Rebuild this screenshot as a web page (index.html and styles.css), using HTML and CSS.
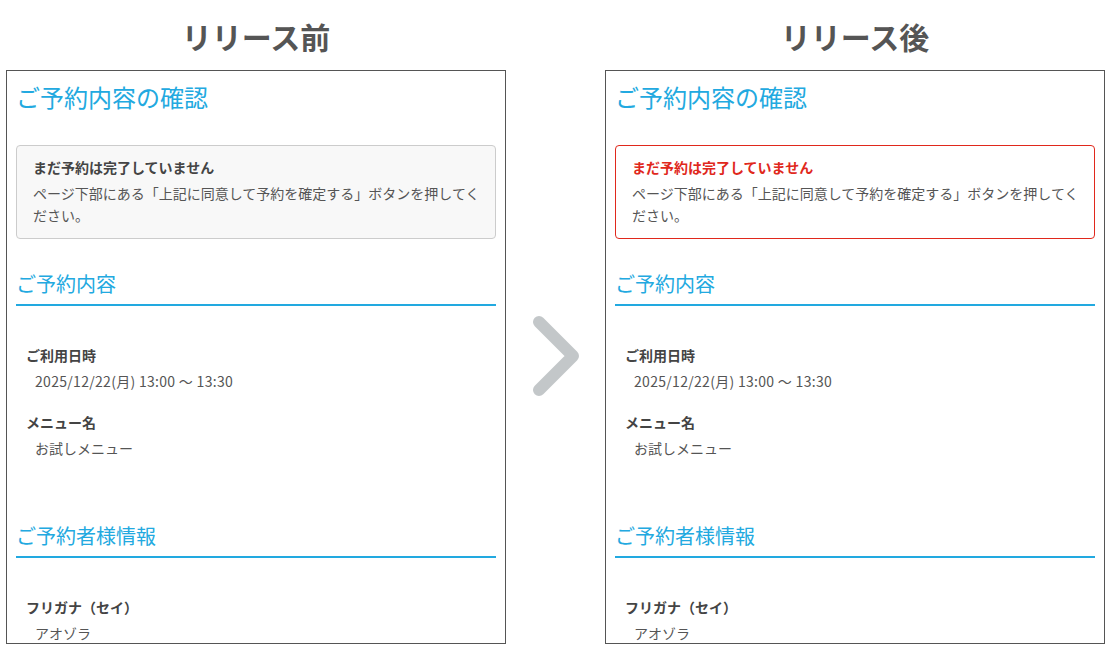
FILE: index.html
```html
<!DOCTYPE html>
<html lang="ja">
<head>
<meta charset="utf-8">
<link rel="stylesheet" href="styles.css">
</head>
<body>
<div class="compare">
  <section class="column">
    <h1 class="col-title">リリース前</h1>
    <div class="panel">
      <h2 class="page-title">ご予約内容の確認</h2>
      <div class="notice">
        <p class="notice-title">まだ予約は完了していません</p>
        <p class="notice-text">ページ下部にある「上記に同意して予約を確定する」ボタンを押してください。</p>
      </div>
      <h3 class="sec-title">ご予約内容</h3>
      <dl class="fields">
        <dt>ご利用日時</dt>
        <dd class="num">2025/12/22(月) 13:00 〜 13:30</dd>
        <dt>メニュー名</dt>
        <dd>お試しメニュー</dd>
      </dl>
      <h3 class="sec-title sec-second">ご予約者様情報</h3>
      <dl class="fields">
        <dt>フリガナ（セイ）</dt>
        <dd>アオゾラ</dd>
      </dl>
    </div>
  </section>
  <div class="arrow">
    <svg width="60" height="92" viewBox="0 0 60 92"><path d="M16 12 L50 46 L16 80" fill="none" stroke="#c3c7c9" stroke-width="12" stroke-linecap="round" stroke-linejoin="round"/></svg>
  </div>
  <section class="column">
    <h1 class="col-title">リリース後</h1>
    <div class="panel">
      <h2 class="page-title">ご予約内容の確認</h2>
      <div class="notice notice-alert">
        <p class="notice-title">まだ予約は完了していません</p>
        <p class="notice-text">ページ下部にある「上記に同意して予約を確定する」ボタンを押してください。</p>
      </div>
      <h3 class="sec-title">ご予約内容</h3>
      <dl class="fields">
        <dt>ご利用日時</dt>
        <dd class="num">2025/12/22(月) 13:00 〜 13:30</dd>
        <dt>メニュー名</dt>
        <dd>お試しメニュー</dd>
      </dl>
      <h3 class="sec-title sec-second">ご予約者様情報</h3>
      <dl class="fields">
        <dt>フリガナ（セイ）</dt>
        <dd>アオゾラ</dd>
      </dl>
    </div>
  </section>
</div>
</body>
</html>
```
FILE: styles.css
```css
* { box-sizing: border-box; }
html, body { margin: 0; padding: 0; background: #fff; }
body {
  font-family: "Noto Sans CJK JP", "Noto Sans", sans-serif;
  color: #555;
  width: 1114px;
  height: 653px;
  overflow: hidden;
}
.compare {
  display: flex;
  align-items: flex-start;
  padding-left: 6px;
}
.column {
  width: 500px;
  display: flex;
  flex-direction: column;
}
.col-title {
  margin: 0;
  height: 70px;
  padding-top: 16px;
  font-size: 30px;
  line-height: 40px;
  font-weight: bold;
  text-align: center;
  color: #555;
}
.panel {
  border: 1px solid #555;
  height: 574px;
  padding: 0 9px;
  overflow: hidden;
}
.page-title {
  margin: 0;
  padding-top: 11px;
  font-size: 24px;
  line-height: 30px;
  font-weight: normal;
  color: #22a9e0;
}
.notice {
  margin-top: 33px;
  border: 1px solid #ccc;
  border-radius: 4px;
  background: #f8f8f8;
  padding: 9px 12px 12px 16px;
}
.notice p { margin: 0; }
.notice-title {
  font-size: 14px;
  font-weight: bold;
  line-height: 24px;
  color: #444;
}
.notice .notice-text {
  margin-top: 3px;
  font-size: 14px;
  line-height: 22px;
  color: #555;
}
.notice-alert {
  background: #fff;
  border-color: #e0281c;
}
.notice-alert .notice-title { color: #e0281c; }
.sec-title {
  margin: 30px 0 0;
  font-size: 20px;
  line-height: 30px;
  font-weight: normal;
  color: #22a9e0;
  padding-bottom: 5px;
  border-bottom: 2px solid #22a9e0;
}
.sec-second { margin-top: 62px; }
.fields {
  margin: 38px 0 0;
  padding-left: 10px;
}
.fields dt {
  font-size: 14px;
  font-weight: bold;
  line-height: 22px;
  color: #444;
}
.fields dd {
  margin: 4px 0 0 9px;
  font-size: 14px;
  line-height: 22px;
  color: #555;
}
.fields .num { letter-spacing: 0.3px; }
.fields dd + dt { margin-top: 19px; }
.arrow {
  width: 99px;
  height: 653px;
  padding-top: 310px;
  padding-left: 17px;
}
.arrow svg { display: block; }
```
